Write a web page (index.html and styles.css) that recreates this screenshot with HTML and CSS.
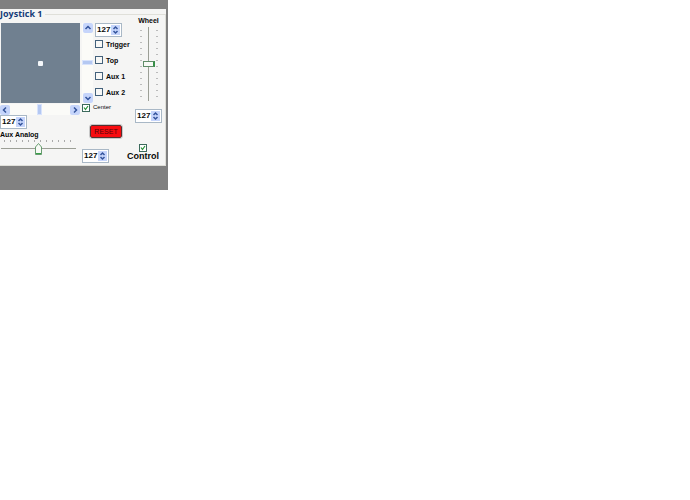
FILE: index.html
```html
<!DOCTYPE html>
<html lang="en">
<head>
<meta charset="utf-8">
<title>Joystick 1</title>
<link rel="stylesheet" href="styles.css">
</head>
<body>
<main class="window">
 <div class="form">
  <fieldset class="panel">
    <legend>Joystick 1</legend>
    <div class="columns">
      <div class="left">
        <div class="pad"><span class="dot"></span></div>
        <div class="scroll">
          <button type="button" class="arrow" aria-label="Left"><svg viewBox="0 0 10 10"><path d="M6 2.5 3.5 5 6 7.5"/></svg></button>
          <input type="range" aria-label="X axis" min="0" max="255" value="127">
          <button type="button" class="arrow" aria-label="Right"><svg viewBox="0 0 10 10"><path d="M4 2.5 6.5 5 4 7.5"/></svg></button>
        </div>
        <div class="spinner">
          <input type="text" value="127" aria-label="X value">
          <span class="steps"><button type="button" aria-label="Increase X"><svg viewBox="0 0 8 5"><path d="M2 4 4 2 6 4"/></svg></button><button type="button" aria-label="Decrease X"><svg viewBox="0 0 8 5"><path d="M2 1 4 3 6 1"/></svg></button></span>
        </div>
        <label class="caption" for="aux">Aux Analog</label>
        <input class="aux" id="aux" type="range" min="0" max="255" value="127">
      </div>
      <div class="right">
        <div class="upper">
          <div class="middle">
            <div class="axis">
              <div class="scroll vertical">
                <button type="button" class="arrow" aria-label="Up"><svg viewBox="0 0 10 10"><path d="M2.5 6 5 3.5 7.5 6"/></svg></button>
                <input type="range" aria-label="Y axis" min="0" max="255" value="127">
                <button type="button" class="arrow" aria-label="Down"><svg viewBox="0 0 10 10"><path d="M2.5 4 5 6.5 7.5 4"/></svg></button>
              </div>
              <div class="checks">
                <div class="spinner">
                  <input type="text" value="127" aria-label="Y value">
                  <span class="steps"><button type="button" aria-label="Increase Y"><svg viewBox="0 0 8 5"><path d="M2 4 4 2 6 4"/></svg></button><button type="button" aria-label="Decrease Y"><svg viewBox="0 0 8 5"><path d="M2 1 4 3 6 1"/></svg></button></span>
                </div>
                <label><input type="checkbox">Trigger</label>
                <label><input type="checkbox">Top</label>
                <label><input type="checkbox">Aux 1</label>
                <label><input type="checkbox">Aux 2</label>
              </div>
            </div>
            <label class="center"><input type="checkbox" checked>Center</label>
          </div>
          <div class="wheel">
            <label class="caption" for="wheel">Wheel</label>
            <input id="wheel" type="range" min="0" max="255" value="127">
            <div class="spinner">
              <input type="text" value="127" aria-label="Wheel value">
              <span class="steps"><button type="button" aria-label="Increase wheel"><svg viewBox="0 0 8 5"><path d="M2 4 4 2 6 4"/></svg></button><button type="button" aria-label="Decrease wheel"><svg viewBox="0 0 8 5"><path d="M2 1 4 3 6 1"/></svg></button></span>
            </div>
          </div>
        </div>
        <div class="lower">
          <div class="actions">
            <button type="button" class="reset">RESET</button>
            <div class="spinner">
              <input type="text" value="127" aria-label="Aux analog value">
              <span class="steps"><button type="button" aria-label="Increase aux"><svg viewBox="0 0 8 5"><path d="M2 4 4 2 6 4"/></svg></button><button type="button" aria-label="Decrease aux"><svg viewBox="0 0 8 5"><path d="M2 1 4 3 6 1"/></svg></button></span>
            </div>
          </div>
          <label class="control"><input type="checkbox" checked>Control</label>
        </div>
      </div>
    </div>
  </fieldset>
 </div>
</main>
</body>
</html>
```
FILE: styles.css
```css
* { box-sizing: border-box; }
body {
  margin: 0;
  background: #fff;
  color: #080808;
  font: bold 7px/9px "Liberation Sans", Arial, sans-serif;
}
button, input { margin: 0; padding: 0; font: inherit; color: inherit; }
svg { display: block; width: 100%; height: 100%; fill: none; stroke: #34549c; stroke-width: 1.5; }
.window {
  width: fit-content;
  padding: 9px 2px 24px 0;
  background: #808080;
}
.form { background: #f5f5f4; }
.panel {
  min-width: 0;
  margin: 0;
  padding: 4px 3px 2px 0;
  border: 1px solid #dfdfd9;
  border-left: 0;
}
.panel legend {
  padding: 0 2px 0 0;
  color: #143c78;
  font: bold 9px/10px "Open Sans", "Noto Sans", sans-serif;
}
.columns { display: flex; gap: 2px; }
.left { display: flex; flex-direction: column; width: 80px; }
.pad {
  display: grid;
  place-items: center;
  height: 80px;
  margin: 0 0 1px 1px;
  background: #708090;
}
.dot { width: 5px; height: 5px; border-radius: 1px; background: #f4f7fa; }

.scroll { display: flex; height: 11px; background: #fbfbf8; }
.scroll.vertical { flex-direction: column; width: 11px; height: 80px; }
.arrow {
  flex: none;
  width: 10px;
  height: 10px;
  border: 0;
  border-radius: 2px;
  background: #c6d5fb;
}
.scroll .arrow { align-self: center; }
input[type="range"] { appearance: none; min-width: 0; min-height: 0; }
.scroll input { flex: 1; width: 100%; height: 100%; background: none; }
.scroll input::-webkit-slider-thumb {
  appearance: none;
  width: 5px;
  height: 11px;
  border: 1px solid #d8e3fc;
  background: #b4c8f2;
}
.vertical input { writing-mode: vertical-lr; }
.vertical input::-webkit-slider-thumb { width: 11px; height: 5px; }

.spinner {
  display: flex;
  width: 27px;
  height: 14px;
  padding: 1px;
  border: 1px solid #a9b8c6;
  background: #fff;
}
.spinner input {
  flex: 1;
  width: 0;
  border: 0;
  background: none;
  font-size: 8px;
  line-height: 10px;
}
.steps { display: flex; flex-direction: column; width: 9px; background: #c6d5fb; }
.steps button { flex: 1; min-height: 0; border: 0; background: none; }
.left .caption { margin-top: 1px; }

.aux {
  width: 75px;
  height: 16px;
  margin-left: 1px;
  background:
    repeating-linear-gradient(90deg, #aaa 0 1px, transparent 1px 6px) 3px 1px / 71px 2px no-repeat,
    linear-gradient(#9c9f96, #9c9f96) 0 9px / 100% 1px no-repeat;
}
.aux::-webkit-slider-thumb {
  appearance: none;
  width: 7px;
  height: 12px;
  margin-top: 3px;
  background: url("data:image/svg+xml,%3Csvg xmlns='http://www.w3.org/2000/svg' viewBox='0 0 7 12'%3E%3Cpath d='M.5 4 3.5 .5 6.5 4V11.5H.5Z' fill='%23f8faf6' stroke='%23689c70'/%3E%3Cpath d='M1 10.5H6' stroke='%2338a048'/%3E%3C/svg%3E");
}

.upper, .axis { display: flex; }
.upper { gap: 3px; }
.middle { width: 50px; }
.axis { gap: 2px; }
.checks { display: flex; flex-direction: column; height: 80px; }
.checks .spinner { margin-bottom: -1px; }
.checks label { display: flex; align-items: center; gap: 3px; height: 16px; white-space: nowrap; }
input[type="checkbox"] {
  appearance: none;
  flex: none;
  width: 8px;
  height: 8px;
  border: 1px solid #43617b;
  background: #f8f8f6;
}
input[type="checkbox"]:checked {
  border-color: #3c6a5c;
  background: url("data:image/svg+xml,%3Csvg xmlns='http://www.w3.org/2000/svg' viewBox='0 0 6 6'%3E%3Cpath d='M1 2.5 2.5 4.5 5 1' fill='none' stroke='%23259035' stroke-width='1.2'/%3E%3C/svg%3E") #fff;
}
.center { display: flex; align-items: center; gap: 3px; font-weight: normal; font-size: 6px; }
.wheel { display: flex; flex-direction: column; align-items: center; width: 27px; margin-top: -7px; }
.wheel input[type="range"] {
  writing-mode: vertical-lr;
  width: 18px;
  height: 74px;
  margin: 2px 0 8px;
  background:
    repeating-linear-gradient(#bbb 0 1px, transparent 1px 6px) 0 3px / 2px 70px no-repeat,
    repeating-linear-gradient(#bbb 0 1px, transparent 1px 6px) 100% 3px / 2px 70px no-repeat,
    linear-gradient(#9c9f96, #9c9f96) 8px 0 / 1px 100% no-repeat;
}
.wheel input::-webkit-slider-thumb {
  appearance: none;
  width: 12px;
  height: 6px;
  border: 1px solid #608c68;
  border-right: 2px solid #389048;
  background: #f8faf6;
}
.lower { display: flex; margin-top: 2px; }
.actions { width: 45px; }
.reset {
  display: block;
  width: 32px;
  height: 13px;
  margin: 0 0 11px 8px;
  border: 1px solid #553030;
  border-radius: 2px;
  outline: 1px solid #c8c8c8;
  background: #f80c10;
  color: #500408;
  font-weight: normal;
}
.control {
  display: flex;
  flex-direction: column;
  align-items: center;
  align-self: flex-end;
  padding-bottom: 2px;
  font-size: 9px;
}
```
